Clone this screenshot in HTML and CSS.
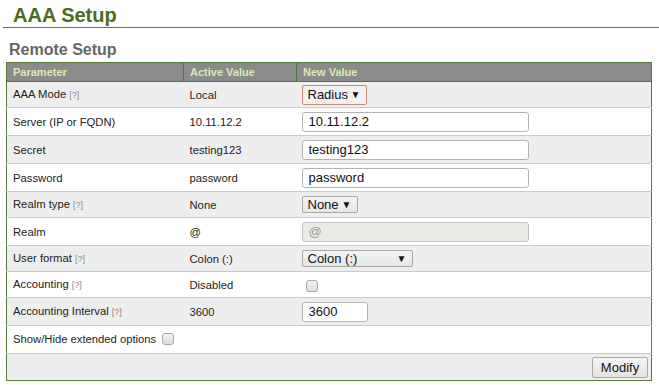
FILE: index.html
```html
<!DOCTYPE html>
<html>
<head>
<meta charset="utf-8">
<title>AAA Setup</title>
<link rel="stylesheet" href="styles.css">
</head>
<body>
<h1 class="page-title">AAA Setup</h1>
<h2 class="section-title">Remote Setup</h2>
<table class="setup">
  <colgroup>
    <col class="c-param">
    <col class="c-active">
    <col class="c-new">
  </colgroup>
  <thead>
    <tr class="head">
      <th>Parameter</th>
      <th>Active Value</th>
      <th>New Value</th>
    </tr>
  </thead>
  <tbody>
    <tr class="odd h26">
      <td>AAA Mode <span class="help">[?]</span></td>
      <td>Local</td>
      <td><div class="select focus w65"><span>Radius</span><span class="arrow">▼</span></div></td>
    </tr>
    <tr class="even h28">
      <td>Server (IP or FQDN)</td>
      <td>10.11.12.2</td>
      <td><input class="text w227" type="text" value="10.11.12.2"></td>
    </tr>
    <tr class="odd h28">
      <td>Secret</td>
      <td>testing123</td>
      <td><input class="text w227" type="text" value="testing123"></td>
    </tr>
    <tr class="even h28">
      <td>Password</td>
      <td>password</td>
      <td><input class="text w227" type="text" value="password"></td>
    </tr>
    <tr class="odd h26">
      <td>Realm type <span class="help">[?]</span></td>
      <td>None</td>
      <td><div class="select small w56"><span>None</span><span class="arrow">▼</span></div></td>
    </tr>
    <tr class="even h28">
      <td>Realm</td>
      <td>@</td>
      <td><input class="text w227 disabled" type="text" value="@" disabled></td>
    </tr>
    <tr class="odd h26">
      <td>User format <span class="help">[?]</span></td>
      <td>Colon (:)</td>
      <td><div class="select small w111"><span>Colon (:)</span><span class="arrow">▼</span></div></td>
    </tr>
    <tr class="even h26">
      <td>Accounting <span class="help">[?]</span></td>
      <td>Disabled</td>
      <td><span class="check ml4"></span></td>
    </tr>
    <tr class="odd h28">
      <td>Accounting Interval <span class="help">[?]</span></td>
      <td>3600</td>
      <td><input class="text w66" type="text" value="3600"></td>
    </tr>
    <tr class="even h28">
      <td colspan="3" class="ext">Show/Hide extended options <span class="check"></span></td>
    </tr>
    <tr class="odd h27">
      <td colspan="3" class="actions"><button class="btn" type="button">Modify</button></td>
    </tr>
  </tbody>
</table>
</body>
</html>
```

FILE: styles.css
```css
html, body {
  margin: 0;
  padding: 0;
  background: #ffffff;
}

body {
  font-family: "Liberation Sans", Arial, sans-serif;
  color: #222222;
}

.page-title {
  margin: 4px 0 0 3px;
  padding-left: 10px;
  font-size: 20px;
  line-height: 23px;
  font-weight: bold;
  color: #4b6b20;
  border-bottom: 1px solid #5a7a3a;
}

.section-title {
  margin: 12px 0 3px 9px;
  font-size: 16px;
  line-height: 19px;
  font-weight: bold;
  color: #666666;
}

.setup {
  margin-left: 6px;
  width: 646px;
  border-collapse: collapse;
  table-layout: fixed;
  border: 1px solid #587a36;
  font-size: 11.25px;
}

.c-param { width: 177px; }
.c-active { width: 113px; }

.head th {
  background: #8b8b8b;
  color: #d7eab8;
  font-weight: bold;
  font-size: 11px;
  text-align: left;
  height: 18px;
  padding: 0 6px;
  border: 1px solid #587a36;
  line-height: 14px;
}

.setup td {
  padding: 0 6px 0 6px;
  border-top: 1px solid #c9c9c9;
  vertical-align: middle;
  color: #222222;
  line-height: 14px;
}

.setup td:nth-child(3) { padding-left: 5px; }

.odd td { background: #eeeeee; }
.even td { background: #ffffff; }

.h26 td { height: 25px; }
.h27 td { height: 26px; }
.h28 td { height: 27px; }

.help {
  font-size: 9px;
  color: #8a8a8a;
}

.select {
  display: inline-flex;
  align-items: center;
  justify-content: space-between;
  box-sizing: border-box;
  height: 17px;
  padding: 0 5px 0 5px;
  font-size: 13px;
  color: #111111;
  background: linear-gradient(#f4f4f4, #e6e6e6);
  border: 1px solid #a9a9a9;
  border-radius: 2px;
  vertical-align: middle;
}

.select.focus {
  height: 20px;
  border-color: #c08f7c;
  background: #f2f0ef;
}

.select .arrow {
  font-size: 10px;
  color: #111111;
}

.w65 { width: 65px; }
.w56 { width: 56px; }
.w111 { width: 111px; }

.text {
  box-sizing: border-box;
  height: 20px;
  margin: 0;
  padding: 0 6px;
  font-family: "Liberation Sans", Arial, sans-serif;
  font-size: 13px;
  color: #111111;
  background: #ffffff;
  border: 1px solid #b3b3b3;
  border-radius: 3px;
  vertical-align: middle;
}

.w227 { width: 227px; }
.w66 { width: 66px; }

.text.disabled {
  background: #ebebe6;
  color: #9a9a9a;
  border-color: #c2c2c2;
}

.check {
  display: inline-block;
  box-sizing: border-box;
  width: 12px;
  height: 12px;
  border: 1px solid #a8a8a8;
  border-radius: 3px;
  background: linear-gradient(#f2f2f2, #dedede);
  vertical-align: middle;
}

.ml4 { margin-left: 4px; }

.ext .check { margin-left: 3px; position: relative; top: -2px; }

.actions {
  text-align: right;
  padding-right: 3px !important;
}

.btn {
  box-sizing: border-box;
  width: 56px;
  height: 21px;
  margin: 0;
  padding: 0;
  font-family: "Liberation Sans", Arial, sans-serif;
  font-size: 13px;
  color: #111111;
  background: linear-gradient(#f6f6f6, #e2e2e2);
  border: 1px solid #a8a8a8;
  border-radius: 2px;
  vertical-align: middle;
}
```
